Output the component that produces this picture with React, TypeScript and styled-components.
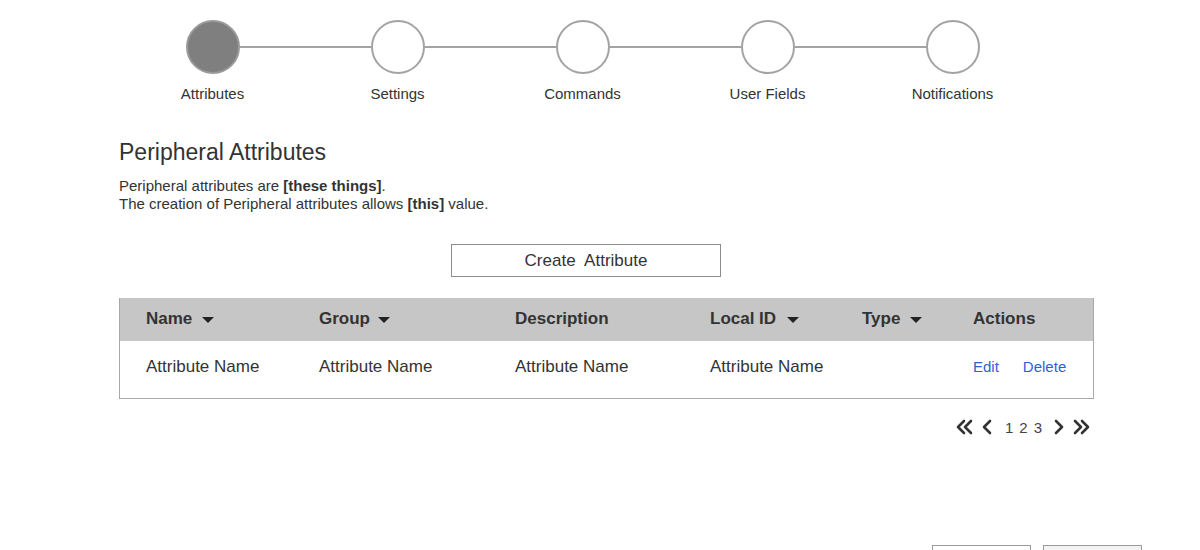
import React from 'react';
import styled, { createGlobalStyle } from 'styled-components';

const GlobalStyle = createGlobalStyle`
  body {
    margin: 0;
    background: #ffffff;
    font-family: "Liberation Sans", Arial, Helvetica, sans-serif;
    color: #333333;
  }
`;

/* -------------- LAYOUT --------------- */

const Page = styled.div`
  padding-top: 20px;
  width: 1200px;
`;

const Content = styled.div`
  margin-left: 119px;
  width: 975px;
`;

/* -------------- STEPPER --------------- */

const StepTrack = styled.div`
  display: flex;
  align-items: center;
  width: 925px;
  padding: 0 65.5px;
  box-sizing: border-box;
  margin-left: 1px;
`;

const StepCircle = styled.div<{ $active?: boolean }>`
  width: 54px;
  height: 54px;
  box-sizing: border-box;
  border-radius: 50%;
  border: 2px solid ${p => (p.$active ? '#9a9a9a' : '#a3a3a3')};
  background: ${p => (p.$active ? '#7f7f7f' : '#ffffff')};
  flex: none;
`;

const StepLine = styled.div`
  flex: 1;
  height: 2px;
  background: #a3a3a3;
`;

const StepLabels = styled.div`
  display: grid;
  grid-template-columns: repeat(5, 185px);
  margin-left: 1px;
  margin-top: 11px;
`;

const StepLabel = styled.div`
  text-align: center;
  font-size: 15px;
  line-height: 18px;
  color: #333;
`;

/* -------------- INTRO --------------- */

const Title = styled.h1`
  margin: 36px 0 0;
  font-size: 23px;
  line-height: 27px;
  font-weight: normal;
  color: #333;
`;

const Blurb = styled.p`
  margin: 11px 0 0;
  font-size: 15px;
  line-height: 18px;
  color: #333;

  b {
    font-weight: bold;
  }
`;

const CreateButton = styled.button`
  display: block;
  margin: 31px 0 0 332px;
  width: 270px;
  height: 33px;
  box-sizing: border-box;
  border: 1px solid #8c8c8c;
  background: #ffffff;
  font-family: "Liberation Sans", Arial, sans-serif;
  font-size: 17px;
  color: #333;
  padding: 0;
`;

/* -------------- TABLE --------------- */

const Table = styled.div`
  margin-top: 21px;
  border: 1px solid #a8a8a8;
  border-top: none;
`;

const Row = styled.div<{ $head?: boolean }>`
  display: grid;
  grid-template-columns: 173px 196px 195px 152px 111px 1fr;
  align-items: center;
  padding-left: 26px;
  height: ${p => (p.$head ? '43px' : '57px')};
  background: ${p => (p.$head ? '#c6c6c6' : '#ffffff')};
  font-size: 17px;
  font-weight: ${p => (p.$head ? 'bold' : 'normal')};
  color: #333;
  padding-bottom: ${p => (p.$head ? '2px' : '6px')};
  box-sizing: border-box;
`;

const HeadCell = styled.div`
  display: flex;
  align-items: center;
`;

const Caret = styled.span<{ $gap?: number }>`
  display: inline-block;
  margin-left: ${p => p.$gap ?? 10}px;
  margin-top: 3px;
  width: 0;
  height: 0;
  border-left: 6px solid transparent;
  border-right: 6px solid transparent;
  border-top: 6px solid #222;
`;

const Actions = styled.div`
  display: flex;
  gap: 24px;
`;

const ActionLink = styled.a`
  font-size: 15px;
  color: #2a63cf;
  text-decoration: none;
  cursor: pointer;
`;

/* -------------- PAGER --------------- */

const Pager = styled.div`
  display: flex;
  justify-content: flex-end;
  align-items: center;
  margin-top: 18px;
  padding-right: 4px;
  height: 20px;
`;

const PageNum = styled.span`
  font-size: 15px;
  color: #444;
  margin: 0 3px;
`;

const PagerIcon = styled.svg`
  display: block;
`;

const Chevron = ({ dir, double }: { dir: 'left' | 'right'; double?: boolean }) => {
  const w = double ? 17 : 10;
  const flip = dir === 'left';
  const paths = double ? ['M2 2 L8 8 L2 14', 'M9 2 L15 8 L9 14'] : ['M2 2 L8 8 L2 14'];
  return (
    <PagerIcon width={w} height={16} viewBox={`0 0 ${w} 16`}>
      <g transform={flip ? `translate(${w} 0) scale(-1 1)` : undefined}>
        {paths.map(d => (
          <path key={d} d={d} fill="none" stroke="#333" strokeWidth={2.6} strokeLinecap="round" strokeLinejoin="round" />
        ))}
      </g>
    </PagerIcon>
  );
};

const PagerGap = styled.span<{ $w: number }>`
  display: inline-block;
  width: ${p => p.$w}px;
`;

/* -------------- FOOTER --------------- */

const Footer = styled.div`
  display: flex;
  justify-content: flex-end;
  gap: 12px;
  margin-top: 108px;
  padding-right: 58px;
`;

const FooterButton = styled.button<{ $shade?: boolean }>`
  width: 99px;
  height: 32px;
  border: 1px solid #9a9a9a;
  background: ${p => (p.$shade ? '#f2f2f2' : '#ffffff')};
`;

/* -------------- BODY --------------- */

const steps = ['Attributes', 'Settings', 'Commands', 'User Fields', 'Notifications'];

const App = () => {
  return (
    <>
      <GlobalStyle />
      <Page>
        <Content>
          <StepTrack>
            {steps.map((s, i) => (
              <React.Fragment key={s}>
                {i > 0 && <StepLine />}
                <StepCircle $active={i === 0} />
              </React.Fragment>
            ))}
          </StepTrack>
          <StepLabels>
            {steps.map(s => (
              <StepLabel key={s}>{s}</StepLabel>
            ))}
          </StepLabels>

          <Title>Peripheral Attributes</Title>
          <Blurb>
            Peripheral attributes are <b>[these things]</b>.
            <br />
            The creation of Peripheral attributes allows <b>[this]</b> value.
          </Blurb>

          <CreateButton>Create&nbsp; Attribute</CreateButton>

          <Table>
            <Row $head>
              <HeadCell>
                Name <Caret />
              </HeadCell>
              <HeadCell>
                Group <Caret $gap={8} />
              </HeadCell>
              <HeadCell>Description</HeadCell>
              <HeadCell>
                Local ID <Caret $gap={11} />
              </HeadCell>
              <HeadCell>
                Type <Caret />
              </HeadCell>
              <HeadCell>Actions</HeadCell>
            </Row>
            <Row>
              <div>Attribute Name</div>
              <div>Attribute Name</div>
              <div>Attribute Name</div>
              <div>Attribute Name</div>
              <div />
              <Actions>
                <ActionLink>Edit</ActionLink>
                <ActionLink>Delete</ActionLink>
              </Actions>
            </Row>
          </Table>

          <Pager>
            <Chevron dir="left" double />
            <PagerGap $w={9} />
            <Chevron dir="left" />
            <PagerGap $w={10} />
            <PageNum>1</PageNum>
            <PageNum>2</PageNum>
            <PageNum>3</PageNum>
            <PagerGap $w={9} />
            <Chevron dir="right" />
            <PagerGap $w={9} />
            <Chevron dir="right" double />
          </Pager>
        </Content>

        <Footer>
          <FooterButton aria-label="Cancel" />
          <FooterButton aria-label="Next" $shade />
        </Footer>
      </Page>
    </>
  );
};

export default App;
